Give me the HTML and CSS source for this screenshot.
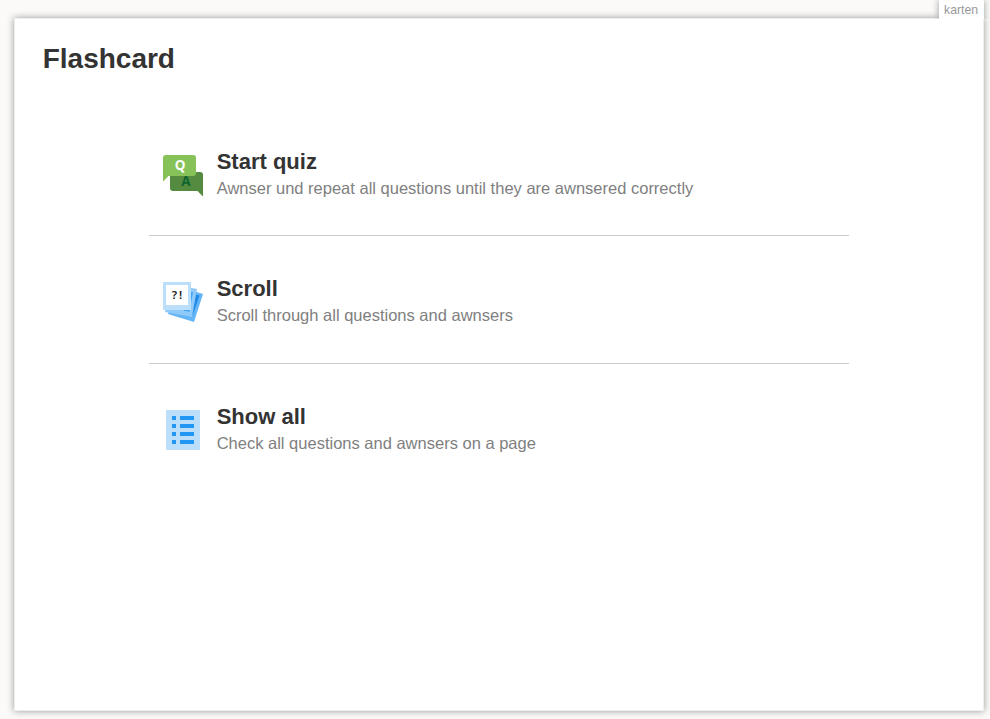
FILE: index.html
```html
<!DOCTYPE html>
<html lang="en">
<head>
<meta charset="utf-8">
<title>Flashcard</title>
<link rel="stylesheet" href="styles.css">
</head>
<body>
<div class="tab">karten</div>
<main class="page">
  <h1 class="title">Flashcard</h1>
  <nav class="menu">
    <div class="item">
      <svg class="icon" viewBox="0 0 52 54" width="52" height="54">
        <path fill="#558b40" d="M15 24h27q3 0 3 3v21.500l-5.500-5.500H15q-3 0-3-3V27q0-3 3-3z"/>
        <text class="letter answer" x="28" y="38">A</text>
        <path fill="#86c257" d="M8 7h27q3 0 3 3v15q0 3-3 3H10.500L5 33.500V10q0-3 3-3z"/>
        <text class="letter question" x="22" y="22">Q</text>
      </svg>
      <div class="text">
        <h2>Start quiz</h2>
        <p>Awnser und repeat all questions until they are awnsered correctly</p>
      </div>
    </div>
    <div class="item">
      <svg class="icon" viewBox="0 0 52 54" width="52" height="54">
        <path fill="#64b5f6" d="M19 10l26 8-9 28-26-8z"/>
        <path fill="#1e88e5" d="M33 17l8.500 2.500-7 20-10-3z"/>
        <path fill="#90caf9" d="M12 8l27 5-5 28-27-5z"/>
        <path fill="#42a5f5" d="M31 15.500l4 .8-3.500 19.500-6-1z"/>
        <path fill="#bbdefb" d="M5 6h28v28H5z"/>
        <path fill="#fff" d="M8 9h22v20H8z"/>
        <text class="mark" x="16.300" y="22.800">?</text>
        <text class="mark" x="22.500" y="22.800">!</text>
      </svg>
      <div class="text">
        <h2>Scroll</h2>
        <p>Scroll through all questions and awnsers</p>
      </div>
    </div>
    <div class="item">
      <svg class="icon" viewBox="0 0 52 54" width="52" height="54">
        <path fill="#bbdefb" d="M8 6h34v40H8z"/>
        <path fill="#2196f3" d="M14 12h4v4h-4zM22 12h14v4H22zM14 20h4v4h-4zM22 20h14v4H22zM14 28h4v4h-4zM22 28h14v4H22zM14 36h4v4h-4zM22 36h14v4H22z"/>
      </svg>
      <div class="text">
        <h2>Show all</h2>
        <p>Check all questions and awnsers on a page</p>
      </div>
    </div>
  </nav>
</main>
</body>
</html>
```
FILE: styles.css
```css
* { box-sizing: border-box; }
html { height: 100%; overflow: hidden; }
body {
  margin: 0;
  height: 719px;
  padding: 0 6px 8px 14px;
  display: flex;
  flex-direction: column;
  background: #fbfaf9;
  color: #333;
  font-family: "Liberation Sans", Arial, sans-serif;
}
.tab {
  flex: none;
  align-self: flex-end;
  position: relative;
  z-index: 1;
  width: 45px;
  height: 19px;
  margin-bottom: -1px;
  padding: 3px 5px 0;
  background: #fff;
  color: #999;
  font-size: 12.250px;
  line-height: 14px;
  box-shadow: 0 0 7px #999;
  clip-path: inset(0 -7px 0 -7px);
}
.page {
  flex: 1;
  padding: 23px 27.700px;
  background: #fff;
  border: 1px solid #eee;
  box-shadow: 0 0 7px #999;
}
.title {
  margin: 0;
  font-size: 28px;
  line-height: 34px;
}
.menu {
  width: 700px;
  margin: 32.300px 0 0 106.300px;
}
.item {
  display: flex;
  height: 127.620px;
  padding: 40px 0 0 9px;
  border-bottom: 1px solid #ccc;
}
.item:last-child { border-bottom: 0; }
.icon {
  flex: none;
  margin-right: 6.700px;
}
.text { margin-top: -0.600px; }
.text h2 {
  margin: 0;
  font-size: 22px;
  line-height: 27px;
}
.text p {
  margin: 0;
  color: #808080;
  font-size: 16.500px;
  line-height: 26px;
}
.letter {
  font: bold 13.500px "Open Sans", sans-serif;
  text-anchor: middle;
}
.answer { fill: #0d652d; }
.question { fill: #fff; }
.mark {
  font: 600 11.500px "Noto Sans", sans-serif;
  text-anchor: middle;
  fill: #222;
}
```
